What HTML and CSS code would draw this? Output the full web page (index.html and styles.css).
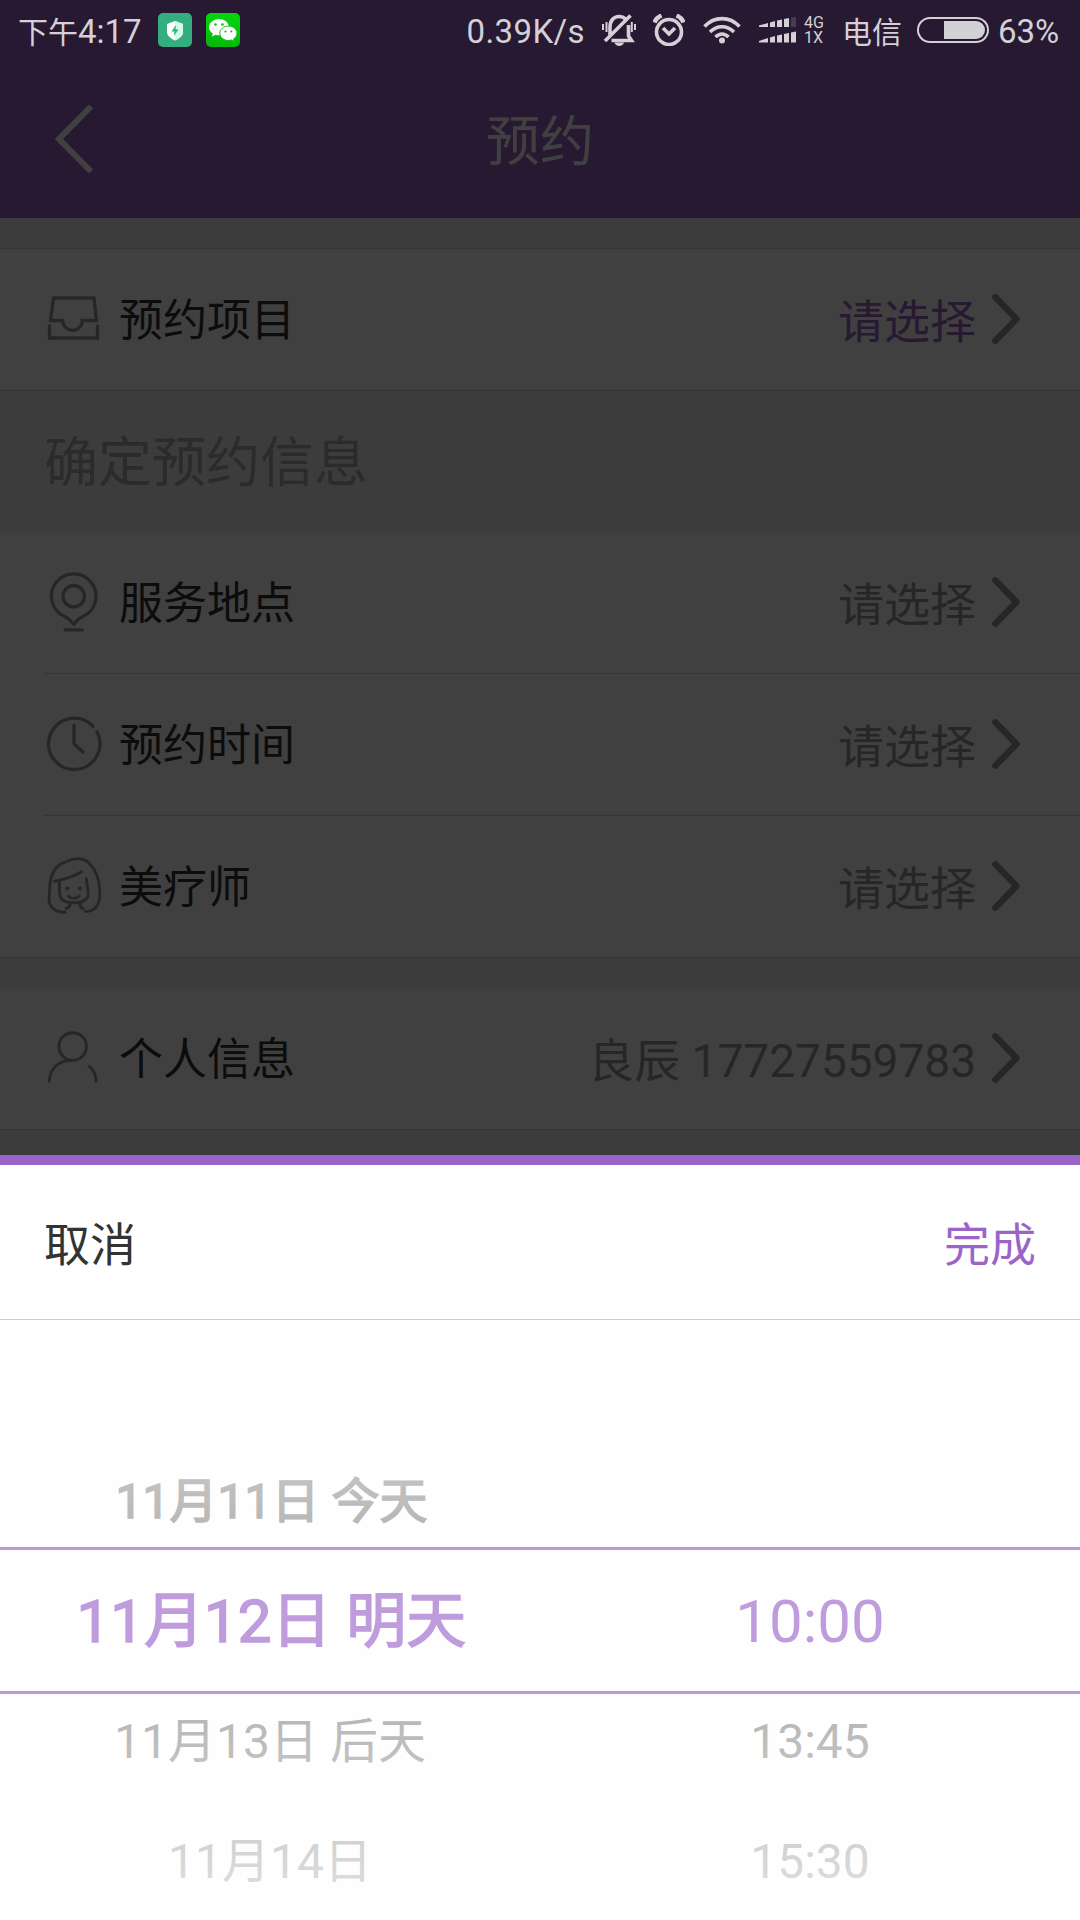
FILE: index.html
```html
<!DOCTYPE html>
<html lang="zh-CN">
<head>
  <meta charset="UTF-8">
  <meta name="viewport" content="width=device-width, initial-scale=1.0">
  <title>预约</title>
  <link rel="stylesheet" href="styles.css">
</head>
<body>
  <div class="page">
    <header class="header">
      <svg class="back" viewBox="0 0 42 72"><path d="M37 3.5 L5 36 L37 68.5"/></svg>
      <h1>预约</h1>
    </header>

    <div class="group">
      <div class="cell">
        <svg class="icon" viewBox="0 0 60 60"><path d="M9.5 9H50l2.5 22.5H38.3a9.8 9.8 0 0 1-19.6 0H6.5z M5.5 35.5V49h48V35.5"/></svg>
        <span class="label">预约项目</span>
        <span class="value active">请选择</span>
        <svg class="arrow" viewBox="0 0 28 50"><path d="M3.3 3.3 L24.5 25 L3.3 46.7"/></svg>
      </div>
    </div>

    <h2 class="section-title">确定预约信息</h2>

    <div class="list">
      <div class="cell">
        <svg class="icon" viewBox="0 0 60 60"><path d="M29.7 52.2l-3.5-3.8c-1.5-2-3-2.8-5.5-3.8A22.3 22.3 0 1 1 38.7 44.6c-2.5 1-4 1.8-5.5 3.8z M21 57.8h17.4"/><circle cx="29.7" cy="24.2" r="10.7"/></svg>
        <span class="label">服务地点</span>
        <span class="value">请选择</span>
        <svg class="arrow" viewBox="0 0 28 50"><path d="M3.3 3.3 L24.5 25 L3.3 46.7"/></svg>
      </div>
      <div class="cell">
        <svg class="icon" viewBox="0 0 60 60"><path d="M49 12.2A25.7 25.7 0 1 0 53 17.8 M30 11.5v18l9 8.7"/></svg>
        <span class="label">预约时间</span>
        <span class="value">请选择</span>
        <svg class="arrow" viewBox="0 0 28 50"><path d="M3.3 3.3 L24.5 25 L3.3 46.7"/></svg>
      </div>
      <div class="cell">
        <svg class="icon girl" viewBox="0 0 60 60">
          <path d="M21 6.2C11 9 6.5 20 6 28L5 43C5 52 12 56.5 21 56.2"/>
          <path d="M23.7 5C31 1.500 40 1.500 45.500 7.500C52 14 55 21 55.700 33.500C56.500 47 53 55.500 41.300 55.500"/>
          <path d="M10.300 25.200C20 23.500 30 20.500 37.700 15.800"/>
          <path d="M15.300 25.200C15.600 32 15 38 16.500 41.500C18.500 45.500 24 46.800 30 46.800C37 46.800 42 44.500 44 40.500C44.800 36 43 29 42.300 22.800"/>
          <path d="M24.300 40c3 3.200 8 3.200 11 0 M26.500 48c-1 2.500-2 4-4.500 4.500 M36 47.500c0 3 1 5 3.500 5"/>
          <circle class="dot" cx="23.300" cy="32.500" r="2"/><circle class="dot" cx="36" cy="32.500" r="2"/>
        </svg>
        <span class="label">美疗师</span>
        <span class="value">请选择</span>
        <svg class="arrow" viewBox="0 0 28 50"><path d="M3.3 3.3 L24.5 25 L3.3 46.7"/></svg>
      </div>
    </div>

    <div class="list user">
      <div class="cell">
        <svg class="icon thin" viewBox="0 0 60 60"><circle cx="28.700" cy="18.500" r="13.800"/><path d="M5.200 53.200C6 41 14 32.500 27 32.500 M45 38.200c5 4 7 9 7 15"/></svg>
        <span class="label">个人信息</span>
        <span class="value">良辰 17727559783</span>
        <svg class="arrow" viewBox="0 0 28 50"><path d="M3.3 3.3 L24.5 25 L3.3 46.7"/></svg>
      </div>
    </div>
  </div>

  <div class="mask"></div>

  <div class="status">
    <span class="time"><span class="cn">下午</span>4:17</span>
    <svg class="app" viewBox="0 0 34 34">
      <rect width="34" height="34" rx="5" fill="#34ae80"/>
      <path d="M17 8l8 3v8c0 4-4 6.500-8 8.500c-4-2-8-4.500-8-8.500v-8z" fill="#fff"/>
      <path d="M17 8l8 3v8c0 4-4 6.500-8 8.500z" fill="#d2fbeb"/>
      <path d="M18 12l-4.500 6.500h3l-.5 4.500 4.500-6.500h-3z" fill="#34ae80"/>
    </svg>
    <svg class="app" viewBox="0 0 34 34">
      <defs><linearGradient id="wx" x2="0" y2="1"><stop offset="0" stop-color="#04d60c"/><stop offset="1" stop-color="#06b80c"/></linearGradient></defs>
      <rect width="34" height="34" rx="5" fill="url(#wx)"/>
      <path d="M13 6c-5.500 0-10 3.700-10 8.300c0 2.600 1.500 4.700 3.800 6.200l-.8 3 3.500-1.800c1.500.4 2.500.5 4.500.5l9-9C22 9 18 6 13 6z" fill="#fff"/>
      <path d="M22.500 13c-5 0-8.700 3.300-8.700 7.300s3.700 7.200 8.700 7.200c1 0 2-.2 3-.5l2.800 1.500-.7-2.500c2-1.300 3.400-3.300 3.400-5.700c0-4-3.700-7.300-8.500-7.300z" fill="#fff" stroke="#06c60c"/>
      <g fill="#06c60c"><circle cx="9.500" cy="11.500" r="1.300"/><circle cx="16.500" cy="11.500" r="1.300"/><circle cx="19.500" cy="18.500" r="1.100"/><circle cx="25.300" cy="18.500" r="1.100"/></g>
    </svg>

    <div class="status-right">
      <span class="speed">0.39K/s</span>
      <svg class="bell" viewBox="0 0 34 32"><path d="M8 22V13c0-6 3.500-10.500 9-10.500c3 0 5 1 6.500 2.500 M26.500 11v11l3 4.500H9.500 M28.500 1.500L3 27"/><path class="waves" d="M1 10v6 M4.500 8v10 M33 10v6 M29.800 8v10"/><path class="fill" d="M12.500 28.500h9.500c-1 4.500-8.500 4.500-9.500 0z"/></svg>
      <svg class="alarm" viewBox="0 0 32 32"><circle cx="16" cy="18" r="12.500"/><path d="M10 14l6 6 6-6"/><path class="thick" d="M1.500 8.500c1-3 3.500-5.500 7-7 M30.500 8.500c-1-3-3.500-5.500-7-7"/></svg>
      <svg class="wifi" viewBox="0 0 38 28"><path d="M1.500 10.500c10-10.500 25-10.500 35 0 M7 16c7-7 17-7 24 0 M12.500 21c4-4 9-4 13 0"/><circle class="fill" cx="19" cy="24.500" r="3"/></svg>
      <svg class="signal" viewBox="0 0 37 26">
        <path d="M0 8.500l9-2.500v4H0z M11 5.500l5-1.500v6h-5z M18 3.500l5-1v7.500h-5z M25 2l5-1v9h-5z M0 24l9-3v4.500H0z M11 20.500l5-1.500v6.500h-5z M18 18.500l5-1v8h-5z M25 17l5-1v9.500h-5z M32 15.500l5-1v11h-5z"/>
        <path class="dim" d="M32 .5l5-.5v10h-5z"/>
      </svg>
      <div class="net"><span>4G</span><span>1X</span></div>
      <span class="carrier">电信</span>
      <div class="battery"><div class="level"></div></div>
      <span class="percent">63%</span>
    </div>
  </div>

  <div class="sheet">
    <div class="toolbar">
      <span>取消</span>
      <span class="done">完成</span>
    </div>
    <div class="picker">
      <div class="column">
        <div class="item bold">11月11日 今天</div>
        <div class="item bold selected">11月12日 明天</div>
        <div class="item">11月13日 后天</div>
        <div class="item">11月14日</div>
      </div>
      <div class="column">
        <div class="item"></div>
        <div class="item selected">10:00</div>
        <div class="item">13:45</div>
        <div class="item">15:30</div>
      </div>
      <div class="shade">
        <div class="fade top"></div>
        <div class="current"></div>
        <div class="fade"></div>
      </div>
    </div>
  </div>
</body>
</html>
```
FILE: styles.css
```css
* {
  box-sizing: border-box;
}
body {
  margin: 0;
  width: 1080px;
  height: 1920px;
  position: relative;
  overflow: hidden;
  background: #f0f0f0;
  color: #333;
  font-family: Roboto, "Noto Sans CJK SC", sans-serif;
}
svg {
  display: block;
  flex: none;
  fill: none;
}

/* page */
.header {
  height: 218px;
  padding-top: 60px;
  background: #9b64c8;
  display: grid;
  grid-template-columns: 54px 42px 1fr 96px;
  align-items: center;
}
.back {
  grid-column: 2;
  width: 42px;
  height: 72px;
  stroke: #fff;
  stroke-width: 6;
}
.header h1 {
  margin: 0;
  padding-top: 7px;
  text-align: center;
  color: #fff;
  font-size: 54px;
  font-weight: 400;
  line-height: 60px;
}
.group {
  margin-top: 30px;
  background: #fff;
  border-top: 1px solid #d4d4d4;
  border-bottom: 1px solid #d4d4d4;
}
.section-title {
  margin: 0;
  height: 141px;
  line-height: 145px;
  padding-left: 44px;
  font-size: 54px;
  font-weight: 400;
  color: #aaa;
}
.list {
  background: #fff;
  border-bottom: 1px solid #d4d4d4;
}
.user {
  margin-top: 30px;
}
.cell {
  height: 141px;
  padding: 0 60px 1px 44px;
  display: flex;
  align-items: center;
}
.cell + .cell {
  height: 142px;
  margin-left: 44px;
  padding-left: 0;
  border-top: 1px solid #d4d4d4;
}
.icon {
  width: 60px;
  height: 60px;
  margin-right: 15px;
  overflow: visible;
  stroke: #999;
  stroke-width: 3.3;
  stroke-linecap: round;
}
.group .icon {
  stroke-linecap: butt;
}
.girl, .thin {
  stroke-width: 2.9;
}
.dot {
  fill: #999;
  stroke: none;
}
.label {
  padding-bottom: 4px;
  font-size: 44px;
}
.value {
  margin-left: auto;
  margin-right: 16px;
  padding-bottom: 3px;
  font-size: 46px;
  color: #999;
}
.value.active {
  color: #9b64c8;
}
.arrow {
  width: 28px;
  height: 50px;
  stroke: #999;
  stroke-width: 6.5;
  stroke-linecap: round;
  stroke-linejoin: round;
}

.mask {
  position: absolute;
  inset: 0;
  background: rgba(0, 0, 0, 0.75);
}

/* status bar */
.status {
  position: absolute;
  top: 0;
  left: 0;
  width: 1080px;
  height: 60px;
  padding: 0 19px 0 18px;
  display: flex;
  align-items: center;
  color: #d4d1d6;
  font-size: 33px;
  white-space: nowrap;
}
.time {
  width: 140px;
}
.cn, .carrier {
  font-size: 30px;
}
.app {
  width: 34px;
  height: 34px;
  margin-right: 14px;
}
.status-right {
  margin-left: auto;
  display: flex;
  align-items: center;
}
.status-right svg {
  stroke: #d4d1d6;
  stroke-width: 3.6;
}
.status-right .fill {
  fill: #d4d1d6;
  stroke: none;
}
.speed {
  margin-right: 17px;
  padding-top: 2px;
  letter-spacing: 0.4px;
}
.bell {
  width: 34px;
  height: 32px;
  margin-right: 17px;
}
.waves {
  stroke-width: 2;
}
.alarm {
  width: 32px;
  height: 32px;
  margin-right: 18px;
}
.thick {
  stroke-width: 4.5;
}
.wifi {
  width: 38px;
  height: 28px;
  margin-right: 18px;
}
.status-right .signal {
  width: 37px;
  height: 26px;
  margin-right: 8px;
  fill: #d4d1d6;
  stroke: none;
}
.signal .dim {
  fill: #483b51;
}
.net {
  width: 38px;
  display: flex;
  flex-direction: column;
  font-size: 16px;
  line-height: 15px;
}
.carrier {
  width: 75px;
  padding-bottom: 1px;
}
.battery {
  width: 72px;
  height: 26px;
  margin-right: 9px;
  padding: 2px;
  border: 2px solid #d4d1d6;
  border-radius: 13px;
  display: flex;
  justify-content: flex-end;
}
.level {
  width: 41px;
  height: 18px;
  background: #d4d1d6;
  border-radius: 0 9px 9px 0;
}
.percent {
  width: 63px;
  padding-top: 2px;
}

/* bottom sheet */
.sheet {
  position: absolute;
  left: 0;
  bottom: 0;
  width: 1080px;
  height: 765px;
  background: #fff;
  border-top: 10px solid #9b64c8;
}
.toolbar {
  height: 155px;
  padding: 0 44px 3px;
  display: flex;
  align-items: center;
  justify-content: space-between;
  border-bottom: 1px solid #ccc;
  font-size: 46px;
}
.done {
  color: #9b64c8;
}
.picker {
  position: relative;
  height: 600px;
  padding-top: 122px;
  display: flex;
  background: #fefefe;
}
.column {
  flex: 1;
  text-align: center;
}
.item {
  height: 120px;
  line-height: 120px;
  font-size: 48px;
  color: #888;
  white-space: nowrap;
}
.bold {
  padding-left: 3px;
  -webkit-text-stroke: 1.6px;
}
.selected {
  font-size: 60px;
  color: #9b64c8;
}

/* fades the rows away from the current one */
.shade {
  position: absolute;
  inset: 0;
  display: grid;
  grid-template-rows: 227px 147px 1fr;
  background: rgba(254, 254, 254, 0.36);
}
.current {
  border-top: 3px solid rgba(155, 100, 200, 0.66);
  border-bottom: 3px solid rgba(155, 100, 200, 0.66);
}
.fade {
  background: linear-gradient(to bottom, rgba(254, 254, 254, 0), rgba(254, 254, 254, 0.64));
}
.fade.top {
  background: linear-gradient(to top, rgba(254, 254, 254, 0), rgba(254, 254, 254, 0.64));
}
```
